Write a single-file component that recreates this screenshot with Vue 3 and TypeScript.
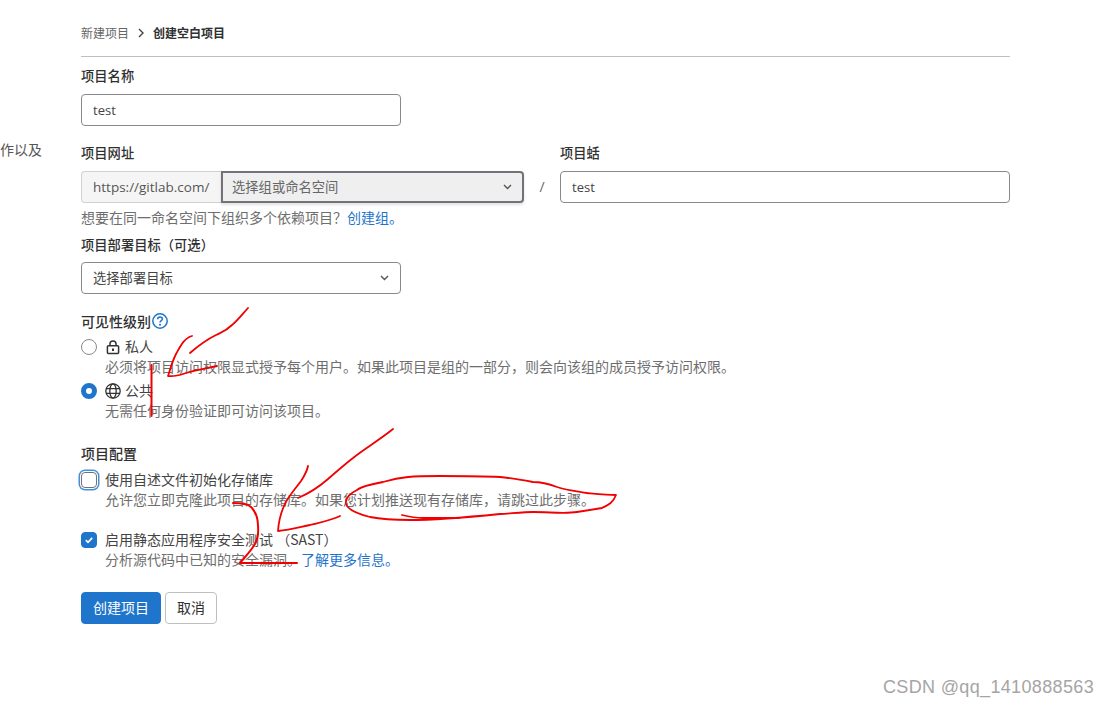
<script setup lang="ts">
interface Stroke { d: string; w?: number }
const strokes: Stroke[] = [
  { d: 'M248 308 C240 317 236 322 232 325 C226 331 222 332 216 335 C206 340 198 346 190 353' },
  { d: 'M192 336 C184 338 180 347 176 354 C172 362 170 370 168 376 C175 377 180 375 186 373 C196 370 208 368 217 366' },
  { d: 'M151.500 365 L151.500 416', w: 2 },
  { d: 'M393 429 C378 441 364 449 353 458 C344 465 336 472 328 479 C320 486 310 493 298 498' },
  { d: 'M308 466 C307 472 304 476 301 481 C294 490 290 495 287 500 C283 507 279 516 278 531 C290 530 300 527 310 525 C322 522 332 520 340 516' },
  { d: 'M233 503 C240 503 247 503 251 507 C256 512 258 518 258 526 C259 536 256 543 253 547 C249 553 244 558 240 563 L297 563', w: 2 },
  { d: 'M408 477 C398 478 390 480 383 482 C372 484 362 486 357 490 C349 494 345 499 346 504 C348 510 358 514 370 517 C380 519 390 520 410 520 C440 520 470 517 500 514 C515 513 525 512 533 512 C550 512 565 514 577 512 C590 510 596 509 602 508 C608 505 613 503 616 495 C608 495 598 494 587 493 C575 491 566 490 557 487 C549 484 541 482 533 482 C522 480 510 478 500 477 C480 476 460 476 440 476 C428 476 418 476 408 477' },
  { d: 'M402 515 C410 517 416 518 423 518 L459 518' },
]
</script>

<template>
  <div class="page">
    <aside class="side"><span>作以及</span></aside>
    <main class="main">
      <nav class="crumbs">
        <span class="crumb">新建项目</span>
        <svg class="crumb-sep" width="8" height="10" viewBox="0 0 8 10" aria-hidden="true"><path d="M2 1 L6 5 L2 9" fill="none" stroke="#444" stroke-width="1.400" /></svg>
        <strong class="crumb-current">创建空白项目</strong>
      </nav>

      <form class="form" @submit.prevent>
        <label class="label small name-label">项目名称</label>
        <input class="input name-input" value="test" readonly />

        <div class="url-row">
          <div class="url-main">
            <label class="label small">项目网址</label>
            <div class="url-group">
              <span class="prefix">https://gitlab.com/</span>
              <div class="ns-select">
                <span>选择组或命名空间</span>
                <svg width="9" height="6" viewBox="0 0 9 6" aria-hidden="true"><path d="M1 1 L4.500 4.500 L8 1" fill="none" stroke="#555" stroke-width="1.400" /></svg>
              </div>
            </div>
          </div>
          <span class="slash">/</span>
          <div class="url-slug">
            <label class="label small">项目蛞</label>
            <input class="input slug-input" value="test" readonly />
          </div>
        </div>

        <p class="desc help">想要在同一命名空间下组织多个依赖项目？<a class="link">创建组。</a></p>

        <label class="label small target-label">项目部署目标（可选）</label>
        <div class="select">
          <span>选择部署目标</span>
          <svg width="9" height="6" viewBox="0 0 9 6" aria-hidden="true"><path d="M1 1 L4.500 4.500 L8 1" fill="none" stroke="#555" stroke-width="1.400" /></svg>
        </div>

        <div class="label vis-label">
          <span>可见性级别</span>
          <svg width="16" height="16" viewBox="0 0 16 16" aria-hidden="true">
            <circle cx="8" cy="8" r="7.200" fill="none" stroke="#1f75cb" stroke-width="1.500" />
            <path d="M5.600 6.300 C5.600 4.700 6.700 4 8 4 C9.400 4 10.400 4.900 10.400 6.100 C10.400 7.700 8 7.700 8 9.500" fill="none" stroke="#1f75cb" stroke-width="1.500" />
            <circle cx="8" cy="11.700" r="1" fill="#1f75cb" />
          </svg>
        </div>

        <div class="option first-radio">
          <span class="radio"></span>
          <svg class="opt-icon" width="16" height="16" viewBox="0 0 16 16" aria-hidden="true">
            <rect x="2.400" y="6.800" width="11.200" height="7.600" rx="1" fill="none" stroke="#333" stroke-width="1.500" />
            <path d="M5 7 V4.800 C5 3 6.300 2 8 2 C9.700 2 11 3 11 4.800 V7" fill="none" stroke="#333" stroke-width="1.500" />
            <rect x="7" y="9.500" width="2" height="2.500" fill="#333" />
          </svg>
          <span class="opt-text">私人</span>
        </div>
        <p class="desc opt-desc">必须将项目访问权限显式授予每个用户。如果此项目是组的一部分，则会向该组的成员授予访问权限。</p>

        <div class="option second-radio">
          <span class="radio on"></span>
          <svg class="opt-icon" width="16" height="16" viewBox="0 0 16 16" aria-hidden="true">
            <g fill="none" stroke="#333" stroke-width="1.300">
              <circle cx="8" cy="8" r="7.200" />
              <ellipse cx="8" cy="8" rx="3.200" ry="7.200" />
              <path d="M1 5.700 H15 M1 10.300 H15" />
            </g>
          </svg>
          <span class="opt-text">公共</span>
        </div>
        <p class="desc opt-desc">无需任何身份验证即可访问该项目。</p>

        <div class="label config-label">项目配置</div>

        <div class="option">
          <span class="check focus"></span>
          <span class="opt-text">使用自述文件初始化存储库</span>
        </div>
        <p class="desc opt-desc">允许您立即克隆此项目的存储库。如果您计划推送现有存储库，请跳过此步骤。</p>

        <div class="option sast">
          <span class="check on">
            <svg width="10" height="10" viewBox="0 0 10 10" aria-hidden="true"><path d="M1.800 5.200 L4 7.300 L8.200 2.800" fill="none" stroke="#fff" stroke-width="1.700" /></svg>
          </span>
          <span class="opt-text">启用静态应用程序安全测试 （SAST）</span>
        </div>
        <p class="desc opt-desc">分析源代码中已知的安全漏洞。<a class="link">了解更多信息。</a></p>

        <div class="actions">
          <button class="btn primary" type="button">创建项目</button>
          <button class="btn" type="button">取消</button>
        </div>
      </form>
    </main>

    <svg class="ink" width="1108" height="707" viewBox="0 0 1108 707" aria-hidden="true">
      <path v-for="(s, i) in strokes" :key="i" :d="s.d" fill="none" stroke="#f00000" :stroke-width="s.w ?? 1.800" stroke-linecap="round" stroke-linejoin="round" />
    </svg>
    <div class="watermark">CSDN @qq_1410888563</div>
  </div>
</template>

<style>
html, body { margin: 0; background: #fff; }
</style>

<style scoped>
.page {
  position: relative;
  width: 1108px;
  height: 707px;
  overflow: hidden;
  display: flex;
  background: #fff;
  color: #303030;
  font-family: "Open Sans", "Noto Sans CJK SC", sans-serif;
  font-size: 14px;
}
.side {
  width: 42px;
  margin-right: 39px;
  padding-top: 139px;
  line-height: 20px;
  color: #555;
  white-space: nowrap;
  font-family: "Noto Sans CJK SC", sans-serif;
}
.main { width: 929px; }
.crumbs {
  box-sizing: border-box;
  height: 57px;
  padding-top: 22px;
  padding-bottom: 0;
  border-bottom: 1px solid #bfbfbf;
  display: flex;
  align-items: flex-start;
  font-size: 12px;
  line-height: 22px;
  font-family: "Noto Sans CJK SC", sans-serif;
}
.crumb { color: #666; }
.crumb-sep { margin: 6px 8px 0 8px; }
.crumb-current { color: #303030; font-weight: 600; }
.form { display: flex; flex-direction: column; align-items: flex-start; }
.label {
  font-family: "Noto Sans CJK SC", sans-serif;
  font-weight: 500;
  font-size: 14px;
  line-height: 20px;
  color: #303030;
  display: block;
}
.label.small { font-size: 13.300px; }
.name-label { margin-top: 9px; }
.input {
  box-sizing: border-box;
  height: 32px;
  border: 1px solid #89888d;
  border-radius: 4px;
  padding: 0 11px;
  font: 13px "Open Sans", sans-serif;
  color: #444;
  background: #fff;
  outline: none;
}
.name-input { width: 320px; margin-top: 8px; }
.url-row { display: flex; align-items: flex-end; width: 929px; margin-top: 17px; }
.url-main { width: 443px; }
.url-main .label, .url-slug .label { margin-bottom: 8px; }
.url-group { display: flex; height: 32px; }
.prefix {
  box-sizing: border-box;
  width: 140px;
  border: 1px solid #d0d0d0;
  border-right: 0;
  border-radius: 4px 0 0 4px;
  background: #f5f5f5;
  padding-left: 11px;
  line-height: 30px;
  font-size: 13.500px;
  color: #555;
  white-space: nowrap;
}
.ns-select {
  box-sizing: border-box;
  flex: 1;
  margin-left: 0;
  border: 2px solid #737278;
  border-radius: 0 4px 4px 0;
  background: #efefef;
  display: flex;
  align-items: center;
  justify-content: space-between;
  padding: 0 10px 2px 9px;
  color: #666;
  font-size: 13.300px;
  font-family: "Noto Sans CJK SC", sans-serif;
  box-shadow: 0 2px 3px rgba(0, 0, 0, 0.12);
}
.slash { width: 36px; text-align: center; line-height: 32px; color: #666; font-size: 14px; }
.url-slug { flex: 1; display: flex; flex-direction: column; }
.slug-input { width: 450px; }
.desc {
  margin: 0;
  font-family: "Noto Sans CJK SC", sans-serif;
  font-size: 14px;
  line-height: 20px;
  color: #6e6e6e;
  white-space: nowrap;
}
.help { margin-top: 4px; }
.link { color: #1f75cb; }
.target-label { margin-top: 8px; }
.select {
  box-sizing: border-box;
  width: 320px;
  height: 32px;
  margin-top: 7px;
  border: 1px solid #89888d;
  border-radius: 4px;
  display: flex;
  align-items: center;
  justify-content: space-between;
  padding: 0 11px 2px;
  font-size: 13.300px;
  font-family: "Noto Sans CJK SC", sans-serif;
  color: #444;
}
.select svg, .ns-select svg { margin-top: 2px; }
.vis-label { margin-top: 17px; display: flex; align-items: center; gap: 1px; }
.option { display: flex; align-items: center; height: 20px; width: 100%; }
.first-radio { margin-top: 6px; }
.second-radio { margin-top: 4px; }
.radio {
  box-sizing: border-box;
  width: 16px;
  height: 16px;
  border-radius: 50%;
  border: 1px solid #89888d;
  background: #fff;
  margin-right: 8px;
}
.radio.on { border: 5px solid #1f75cb; }
.opt-icon { margin-right: 4px; }
.opt-text {
  font-family: "Noto Sans CJK SC", "Open Sans", sans-serif;
  font-size: 14px;
  line-height: 20px;
  padding-bottom: 2px;
  color: #444;
  white-space: nowrap;
}
.opt-desc { padding-left: 24px; margin-top: -1px; margin-bottom: 1px; }
.config-label { margin-top: 22px; margin-bottom: 7px; }
.check {
  box-sizing: border-box;
  width: 16px;
  height: 16px;
  border-radius: 4px;
  border: 1px solid #737278;
  background: #fff;
  margin-right: 8px;
  display: flex;
  align-items: center;
  justify-content: center;
}
.check.focus { box-shadow: 0 0 0 1px #fff, 0 0 0 2.500px #428fdc; }
.check.on { background: #1f75cb; border-color: #1f75cb; }
.sast { margin-top: 20px; }
.actions { display: flex; gap: 4px; margin-top: 22px; }
.btn {
  box-sizing: border-box;
  height: 32px;
  padding: 0 11px 2px;
  border: 1px solid #bfbfbf;
  border-radius: 4px;
  background: #fff;
  color: #303030;
  font-size: 14px;
  font-family: "Noto Sans CJK SC", sans-serif;
}
.btn.primary { background: #1f75cb; border-color: #1f75cb; color: #fff; }
.ink { position: absolute; left: 0; top: 0; pointer-events: none; }
.watermark {
  position: absolute;
  right: 14px;
  top: 676px;
  font-family: "Liberation Sans", sans-serif;
  font-size: 18px;
  line-height: 22px;
  color: #a5a5a5;
  letter-spacing: 0.350px;
  white-space: nowrap;
}
</style>
